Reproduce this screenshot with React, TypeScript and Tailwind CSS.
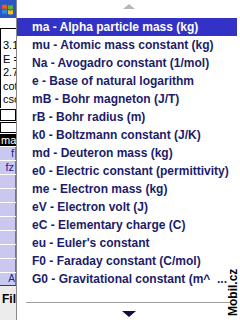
import React from "react";

const items = [
  "ma - Alpha particle mass (kg)",
  "mu - Atomic mass constant (kg)",
  "Na - Avogadro constant (1/mol)",
  "e - Base of natural logarithm",
  "mB - Bohr magneton (J/T)",
  "rB - Bohr radius (m)",
  "k0 - Boltzmann constant (J/K)",
  "md - Deuteron mass (kg)",
  "e0 - Electric constant (permittivity)",
  "me - Electron mass (kg)",
  "eV - Electron volt (J)",
  "eC - Elementary charge (C)",
  "eu - Euler's constant",
  "F0 - Faraday constant (C/mol)",
  "G0 - Gravitational constant (m^  ...",
];

function Flag() {
  return (
    <svg width="13" height="13" viewBox="0 0 13 13">
      <path d="M1 2 Q3 1 6 2 L6 6 Q3 5 1 6 Z" fill="#f05a22" />
      <path d="M7 2 Q9 3 12 2 L12 6 Q9 7 7 6 Z" fill="#5cb531" />
      <path d="M1 7 Q3 6 6 7 L6 11 Q3 10 1 11 Z" fill="#2a8ee0" />
      <path d="M7 7 Q9 8 12 7 L12 11 Q9 12 7 11 Z" fill="#f8c21b" />
    </svg>
  );
}

export default function App() {
  const font = { fontFamily: '"Liberation Sans", Arial, sans-serif' };
  return (
    <div className="relative w-[240px] h-[320px] overflow-hidden bg-white flex" style={font}>
      {/* left background strip */}
      <div className="w-[16px] h-full flex flex-col shrink-0 overflow-hidden">
        <div className="h-[18px] bg-[#2a56c8] flex items-center pl-[1px]">
          <Flag />
        </div>
        <div className="h-[10px] bg-white" />
        <div className="h-[80px] border-t border-l border-black bg-white pl-[2px] pt-[10px] text-[11px] leading-[13.5px] text-black whitespace-nowrap">
          <div>3.1</div>
          <div>E =</div>
          <div>2.7</div>
          <div>cot</div>
          <div>csc</div>
        </div>
        <div className="h-[12px] border border-black bg-white mt-[1px]" />
        <div className="h-[11px] border border-black border-r-0 bg-white mt-[1px]" />
        <div className="h-[12px] bg-black text-white text-[11px] leading-[12px] pl-[1px] mt-[1px] whitespace-nowrap">ma</div>
        <div className="flex flex-col gap-[1px] mt-[1px] bg-white">
          <div className="h-[13px] bg-[#c9c9ef] border-r border-[#6a6ad0] text-[11px] leading-[13px] text-[#2020a0] text-right pr-[1px]">f</div>
          <div className="h-[13px] bg-[#c9c9ef] border-r border-[#6a6ad0] text-[11px] leading-[13px] text-[#2020a0] text-right pr-[1px]">fz</div>
          <div className="h-[13px] bg-[#c9c9ef] border-r border-[#6a6ad0]" />
          <div className="h-[13px] bg-[#c9c9ef] border-r border-[#6a6ad0]" />
          <div className="h-[13px] bg-[#c9c9ef] border-r border-[#6a6ad0]" />
          <div className="h-[13px] bg-[#c9c9ef] border-r border-[#6a6ad0]" />
          <div className="h-[13px] bg-[#c9c9ef] border-r border-[#6a6ad0]" />
          <div className="h-[13px] bg-[#c9c9ef] border-r border-[#6a6ad0]" />
          <div className="h-[13px] bg-[#c9c9ef] border-r border-[#6a6ad0]" />
          <div className="h-[12px] bg-[#c9c9ef] border-r border-[#6a6ad0] text-[10px] leading-[12px] text-[#2020a0] text-right">A</div>
        </div>
        <div className="flex-1 border-t border-[#404040] bg-[#ececec] text-[12px] font-bold text-black pl-[2px] pt-[4px] whitespace-nowrap">
          File
        </div>
      </div>

      {/* dropdown list */}
      <div className="flex-1 h-full border-l border-[#8a8a8a] bg-white flex flex-col">
        <div className="h-[18px] flex items-start justify-center pt-[4px]">
          <svg width="12" height="5" viewBox="0 0 12 5">
            <path d="M0 5 L6 0 L12 5 Z" fill="#b8b8b8" />
          </svg>
        </div>
        <div className="flex flex-col pr-[3px]">
          {items.map((t, i) => (
            <div
              key={i}
              className={
                "h-[18px] pl-[15px] text-[12px] font-bold leading-[18px] whitespace-pre overflow-hidden " +
                (i === 0 ? "bg-[#3232c6] text-white" : "text-[#1c1c6a]")
              }
            >
              {t}
            </div>
          ))}
        </div>
        <div className="h-[14px]" />
        <div className="mx-[9px] mr-[10px] h-px bg-[#a0a0a0]" />
        <div className="flex justify-center pt-[8px]">
          <svg width="14" height="6" viewBox="0 0 14 6">
            <path d="M0 0 L14 0 L7 6 Z" fill="#101040" />
          </svg>
        </div>
      </div>

      {/* watermark */}
      <div className="absolute left-[227px] top-[316px] origin-top-left -rotate-90 text-[12px] font-bold text-black leading-[12px] whitespace-nowrap">
        Mobil.cz
      </div>
    </div>
  );
}
